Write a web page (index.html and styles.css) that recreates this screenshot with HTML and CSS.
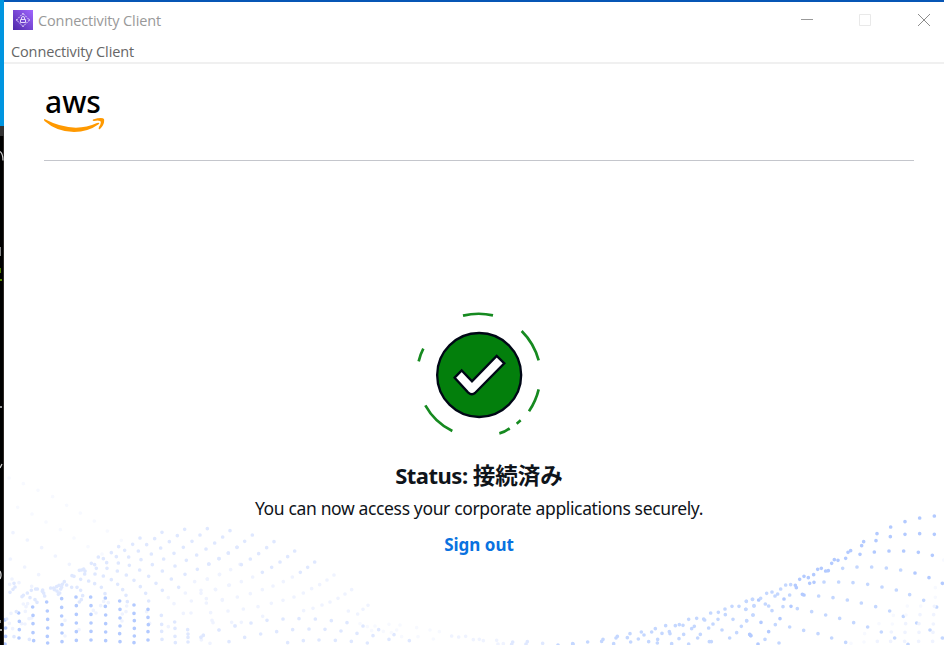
FILE: index.html
```html
<!DOCTYPE html>
<html lang="ja">
<head>
    <meta charset="UTF-8">
    <title>Connectivity Client</title>
    <link rel="stylesheet" href="styles.css">
</head>
<body>
    <!-- Desktop strip visible behind the window -->
    <svg class="desktop" width="4" height="645" viewBox="0 0 4 645" aria-hidden="true">
        <rect width="4" height="126" fill="#0095e0"/>
        <rect y="126" width="4" height="10" fill="#333"/>
        <rect y="136" width="4" height="509" fill="#000"/>
        <path d="M3.5 136v509" stroke="#2b2724"/>
        <g fill="none" stroke="#ccc" stroke-width="1.3">
            <path d="M0 151.500q3 2 3 9M0 247v9M0 407h2M2 464l-2 4M0 571q2 4 0 8M0 620v3M0 630h2"/>
            <path d="M0 268v5M0 280h2" stroke="#76b900"/>
        </g>
    </svg>

    <div class="window">
        <!-- Title bar -->
        <header class="titlebar">
            <svg class="app-icon" width="20" height="20" viewBox="0 0 20 20">
                <defs>
                    <linearGradient id="purple" x1="0" y1="1" x2="1" y2="0">
                        <stop offset="0" stop-color="#4d27a8"/>
                        <stop offset="1" stop-color="#a166ff"/>
                    </linearGradient>
                </defs>
                <rect width="20" height="20" fill="url(#purple)"/>
                <g fill="none" stroke="#e4d8fa" stroke-width="1">
                    <path d="M10 3.500L16.500 10L10 16.500L3.500 10z" stroke-dasharray="2 1"/>
                    <path d="M7.500 9.500h5v3h-5zM8.500 9.500v-1.500q0-1.500 1.500-1.500t1.500 1.500v1.500M3 10h1.500M15.500 10H17M10 3v1.500M10 15.500V17"/>
                </g>
            </svg>
            <span class="title">Connectivity Client</span>
            <div class="controls">
                <svg width="12" height="14" viewBox="0 0 12 14"><path d="M0 6.500h12" stroke="#999"/></svg>
                <svg width="12" height="12" viewBox="0 0 12 12"><path d="M.5.5h11v11H.5z" fill="none" stroke="#e9e9e9"/></svg>
                <svg width="12" height="12" viewBox="0 0 12 12"><path d="M0 0l12 12M12 0L0 12" stroke="#8c8c8c"/></svg>
            </div>
        </header>
        <nav class="menubar"><span>Connectivity Client</span></nav>

        <main class="content">
            <!-- Dotted wave background -->
            <svg class="waves" width="940" height="175" viewBox="4 470 940 175" aria-hidden="true">
                <g transform="translate(0 470) scale(.33333)">
                    <path class="dots faint" d="M27 24h0M70 41h0M114 61h0M158 80h0M200 106h0M241 129h0M283 153h0M322 183h0M364 211h0M53 112h0M96 132h0M138 156h0M181 179h0M222 204h0M264 230h0M306 252h0"/>
                    <path class="dots pale" d="M39 188h0M82 210h0M125 233h0M166 258h0M208 283h0M31 267h0M74 291h0M116 314h0M36 327h0M57 338h0M29 343h0M95 349h0"/>
                    <path class="dots light" d="M42 340h0M45 351h0M39 358h0M30 367h0M66 380h0M70 376h0M82 369h0M90 383h0M94 361h0M105 389h0M107 357h0M112 357h0M111 397h0M128 360h0M131 369h0M134 378h0M127 364h0M152 354h0M161 354h0M170 350h0M177 346h0M163 359h0M171 363h0M179 369h0M175 373h0M182 357h0M187 343h0M193 335h0M185 352h0M200 345h0M216 317h0M222 319h0M215 352h0M231 352h0M242 361h0M248 377h0M244 389h0M238 396h0M238 301h0M244 300h0M251 297h0M255 303h0M254 312h0M242 328h0M266 333h0M284 341h0M304 352h0M315 371h0M274 280h0M284 284h0M289 295h0M285 312h0M295 261h0M310 266h0M320 278h0M321 295h0M310 318h0M334 329h0M353 343h0M368 359h0M378 376h0M382 395h0M334 248h0M349 260h0M355 279h0M352 303h0M379 315h0M402 331h0M421 350h0M437 370h0M446 393h0M356 230h0M374 241h0M386 261h0M388 286h0M419 300h0M446 319h0M468 340h0M487 361h0M398 223h0M415 243h0M423 269h0M457 284h0M487 303h0M514 327h0M536 352h0M420 204h0M440 224h0M454 252h0M491 267h0M525 288h0M555 313h0M464 206h0M482 234h0M522 250h0M559 271h0M592 298h0M486 187h0M508 215h0M550 232h0M590 255h0M627 282h0M532 197h0M576 214h0M618 237h0M657 266h0M554 178h0M600 195h0M644 219h0M685 249h0M622 176h0M668 201h0M711 232h0M690 182h0"/>
                    <path class="dots pale" d="M505 383h0M522 401h0M556 369h0M574 393h0M584 335h0M603 361h0M619 386h0M622 327h0M647 359h0M667 389h0M659 313h0M688 345h0M720 283h0M28 460h0M38 476h0M65 461h0M75 462h0M87 446h0M95 444h0M33 430h0M70 402h0M78 410h0M76 424h0M83 401h0M195 451h0M195 498h0M237 479h0M280 421h0M288 429h0M302 407h0M367 432h0M378 425h0M380 408h0M325 398h0M311 394h0M366 453h0M440 425h0M449 460h0M505 470h0M550 430h0M573 429h0M603 501h0M610 495h0M604 510h0M657 480h0M705 467h0M636 451h0M630 520h0"/>
                    <path class="dots blue" d="M15 450h0M17 474h0M17 499h0M15 522h0M56 429h0M58 454h0M58 479h0M57 504h0M98 411h0M99 436h0M99 461h0M99 488h0M101 512h0M140 396h0M142 423h0M143 448h0M143 474h0M142 499h0M143 519h0M185 386h0M185 412h0M185 438h0M186 464h0M186 489h0M186 515h0M228 381h0M229 407h0M229 433h0M229 459h0M229 485h0M229 511h0M272 381h0M273 407h0M273 433h0M273 459h0M273 484h0M273 510h0M316 384h0M316 409h0M317 435h0M317 461h0M317 486h0M317 512h0M359 393h0M360 418h0M360 444h0M360 468h0M359 491h0M360 515h0M402 405h0M402 430h0M403 452h0M403 475h0M403 498h0M402 518h0M444 418h0M444 442h0M445 464h0M444 485h0M444 510h0"/>
                    <path class="dots light" d="M484 436h0M485 463h0M485 484h0M486 508h0M524 456h0M525 475h0M525 499h0M526 518h0M563 479h0M564 492h0M564 502h0M564 516h0M42 500h0M88 508h0M20 447h0M49 425h0"/>
                </g>
                <g transform="translate(200 500) scale(.33333)">
                    <path class="dots light" d="M157 105h0M134 124h0M111 142h0M85 159h0M57 176h0M26 192h0M222 125h0M200 143h0M176 161h0M151 177h0M124 194h0M284 153h0M263 170h0M240 186h0M215 202h0M187 217h0M344 186h0M323 202h0M301 217h0"/>
                    <path class="dots pale" d="M92 209h0M58 224h0M22 237h0M158 231h0M124 245h0M86 256h0M46 268h0M3 280h0M277 231h0M250 245h0M219 258h0M187 269h0M151 281h0M112 291h0M67 301h0M19 309h0M402 225h0M381 240h0M359 254h0M335 266h0M310 279h0M282 291h0M249 301h0M214 310h0M174 320h0M130 327h0M84 333h0M32 338h0M455 269h0M435 282h0M414 295h0M390 306h0M366 315h0M339 325h0M504 316h0M489 328h0M473 342h0M39 368h0M95 367h0M124 367h0M188 349h0M311 332h0M445 333h0"/>
                    <path class="dots light" d="M10 406h0M3 412h0M57 390h0M105 378h0M153 369h0M201 361h0M249 357h0M297 356h0M346 357h0M394 362h0M441 368h0M489 378h0M536 389h0M582 404h0M628 422h0M87 425h0M134 412h0M182 402h0M230 395h0M278 389h0M327 387h0M375 388h0M423 393h0M471 400h0M519 407h0M567 418h0M263 428h0M310 422h0M357 420h0M406 421h0M454 424h0M502 429h0"/>
                    <path class="dots faint" d="M480 371h0M502 380h0M525 378h0M550 394h0M574 398h0M590 390h0M515 392h0M567 373h0M600 375h0M650 383h0M690 390h0M718 395h0M605 410h0M654 410h0M700 417h0"/>
                </g>
                <g transform="translate(380 585) scale(.33333)">
                    <path class="dots pale" d="M215 153h0M236 156h0M257 154h0M280 164h0M298 163h0M310 167h0M350 166h0M354 177h0M370 176h0"/>
                    <path class="dots light" d="M398 171h0M395 178h0M442 170h0M438 177h0M488 175h0"/>
                    <path class="dots soft" d="M534 180h0M579 177h0"/>
                </g>
                <g transform="translate(560 500) scale(.33333)">
                    <path class="dots soft" d="M38 431h0M83 426h0M125 424h0M129 418h0M168 414h0M172 409h0M161 431h0M202 413h0M210 401h0M212 426h0M235 417h0M244 396h0M252 405h0M275 396h0M286 386h0M266 425h0M293 418h0M292 429h0M306 400h0M317 377h0M328 395h0M330 401h0M335 431h0M346 377h0M358 374h0M369 376h0M371 403h0M357 416h0M386 358h0M395 386h0M403 379h0M410 355h0M413 414h0M421 403h0M431 357h0M434 360h0M446 384h0M459 372h0M452 339h0M474 358h0M475 337h0M496 344h0M495 327h0M516 319h0M537 319h0M486 390h0M509 414h0M530 398h0M544 379h0M560 362h0M519 358h0M558 328h0M559 304h0M577 298h0M582 318h0M579 345h0M570 404h0M573 407h0M448 425h0M454 425h0M386 432h0"/>
                </g>
                <g transform="translate(744 480) scale(.33333)">
                    <path class="dots blue" d="M399 161h0M440 141h0M483 125h0M527 114h0M571 108h0M396 182h0M439 170h0M483 163h0M527 161h0M571 163h0M359 185h0M353 197h0M348 223h0M391 216h0M435 213h0M479 213h0M523 217h0M565 226h0M320 212h0M312 217h0M305 235h0M282 241h0M271 239h0M263 250h0M253 272h0M245 273h0M232 265h0M221 268h0M209 284h0M193 293h0M180 289h0M167 298h0M210 307h0M197 310h0M157 323h0M154 316h0M175 343h0M180 345h0M120 357h0M141 379h0M108 416h0M74 455h0M17 463h0M20 467h0M42 492h0M51 427h0M44 360h0M555 293h0M595 310h0M513 279h0"/>
                    <path class="dots soft" d="M296 265h0M339 261h0M383 261h0M427 264h0M470 270h0M240 306h0M284 306h0M327 308h0M371 313h0M414 321h0M457 330h0M497 344h0M539 361h0M578 381h0M224 348h0M267 353h0M310 360h0M352 369h0M395 380h0M437 393h0M478 409h0M518 429h0M558 450h0M595 474h0M160 386h0M203 395h0M245 405h0M287 415h0M329 428h0M371 441h0M412 456h0M452 474h0M492 493h0M137 441h0M179 451h0M222 461h0M263 474h0M305 487h0M140 314h0M125 315h0M110 327h0M101 342h0M93 348h0M84 336h0M68 340h0M50 355h0M26 358h0M7 364h0M5 388h0M30 377h0M64 372h0M74 378h0M84 392h0M27 405h0M8 423h0M117 380h0M137 345h0M94 434h0M63 478h0M105 489h0"/>
                    <path class="dots pale" d="M525 431h0M568 432h0M485 431h0M528 404h0M569 404h0M571 379h0M442 456h0M483 457h0M525 457h0M567 457h0M400 484h0M440 484h0M482 484h0M524 484h0M566 484h0"/>
                    <path class="dots faint" d="M599 240h0M574 323h0M574 352h0M530 378h0M490 378h0M448 406h0M486 405h0M405 431h0M445 432h0M362 461h0M360 486h0M321 490h0"/>
                </g>
            </svg>

            <div class="brand">
                <span class="brand-name">aws</span>
                <svg class="smile" width="62" height="16" viewBox="0 0 62 16">
                    <path d="M.500 1Q29 16 53 5Q56 4 55 6Q44 14 30 14Q13 14 .500 3Q-.500 1 .500 1z" fill="#f90"/>
                    <path d="M49 1.500Q58-1 60 1Q61 6 56 11Q54 12 55 9Q58 4 56 3Q54 2 50 3Q48 3 49 1.500z" fill="#f90"/>
                </svg>
            </div>

            <section class="status">
                <svg class="status-icon" width="160" height="150" viewBox="0 0 480 450">
                    <g fill="none" stroke="#168a20" stroke-width="8">
                        <path d="M189 47Q234 36 279 46M365 93Q402 130 416 181M416 268Q408 302 387 334M362 361L350 371M329 385Q315 396 298 400M157 393Q104 367 76 316M56 184Q61 163 70 146"/>
                    </g>
                    <g stroke="#000716" stroke-width="7">
                        <circle cx="237.500" cy="225" r="126" fill="#037f0c"/>
                        <path d="M164 233L185 211L216 244L290 168L313 190L225 279Q215 287 204 277z" fill="#fff"/>
                    </g>
                </svg>
                <h1>Status: <span class="jp">接続済み</span></h1>
                <p>You can now access your corporate applications securely.</p>
                <a class="signout" href="#">Sign out</a>
            </section>
        </main>
    </div>
</body>
</html>
```
FILE: styles.css
```css
* {
    box-sizing: border-box;
}
body {
    margin: 0;
    height: 645px;
    overflow: hidden;
    display: flex;
    background: #0756b5;
    font-family: "Noto Sans", "Noto Sans CJK JP", sans-serif;
    color: #0f141a;
}
.desktop {
    flex: none;
}
.window {
    width: 940px;
    height: 643px;
    margin-top: 2px;
    background: #fff;
    display: flex;
    flex-direction: column;
}

/* Title bar */
.titlebar {
    height: 36px;
    display: flex;
    align-items: center;
    padding: 0 14px 0 9px;
}
.title {
    margin-left: 5px;
    font-family: "Open Sans", sans-serif;
    font-size: 14.500px;
    letter-spacing: -0.12px;
    color: #999;
}
.controls {
    margin-left: auto;
    display: flex;
    align-items: center;
    gap: 47px;
}
.controls svg:first-child {
    margin-right: -1px;
}
.menubar {
    height: 26px;
    padding-left: 7px;
    font-family: "Open Sans", sans-serif;
    font-size: 14.500px;
    letter-spacing: -0.12px;
    line-height: 27px;
    color: #666;
    border-bottom: 2px solid #f0f0f0;
}
.menubar span {
    display: block;
    height: 24px;
}

/* Page */
.content {
    position: relative;
    flex: 1;
    padding: 0 30px 0 40px;
}
.brand {
    position: relative;
    height: 97px;
    border-bottom: 1px solid #c4c6cc;
    display: flex;
    flex-direction: column;
}
.brand-name {
    margin: 22px 0 0 1px;
    height: 32px;
    font-size: 30px;
    font-weight: 500;
    line-height: 32px;
    color: #000;
}
.status {
    position: relative;
    display: flex;
    flex-direction: column;
    align-items: center;
    padding-top: 139px;
}
.status-icon {
    display: block;
    margin-left: 2px;
}
.status h1 {
    margin: 9px 0 0;
    font-size: 22px;
    line-height: 32px;
    height: 32px;
    font-weight: 700;
    letter-spacing: -0.5px;
}
.jp {
    font-size: 22.500px;
    letter-spacing: 0;
}
.status p {
    margin: 6px 0 0;
    font-size: 17.500px;
    line-height: 22px;
    letter-spacing: -0.36px;
}
.signout {
    margin-top: 15px;
    font-size: 17px;
    line-height: 22px;
    font-weight: 700;
    color: #0972e0;
    text-decoration: none;
}

/* Dotted waves */
.waves {
    position: absolute;
    left: 0;
    bottom: 0;
}
.dots {
    fill: none;
    stroke-linecap: round;
    stroke-width: 11px;
    stroke: #dfe8ff;
}
.faint {
    stroke: #f7f9ff;
}
.pale {
    stroke: #eff3ff;
}
.soft {
    stroke: #c4d7ff;
}
.blue {
    stroke: #b3caff;
}
```
